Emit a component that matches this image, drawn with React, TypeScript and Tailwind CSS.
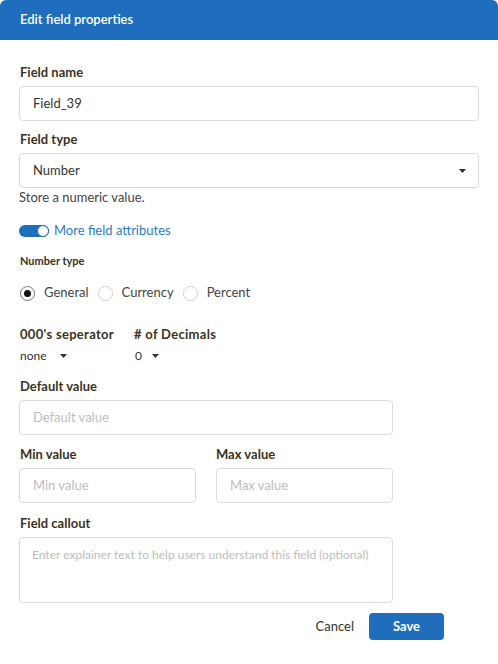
import { useState } from "react";

const font = { fontFamily: "Lato, 'Open Sans', sans-serif" };

function Caret({ className = "" }: { className?: string }) {
  return (
    <svg className={className} width="7" height="4" viewBox="0 0 7 4">
      <path d="M0 0h7L3.5 4z" fill="#333" />
    </svg>
  );
}

function Label({ children, className = "" }: { children: React.ReactNode; className?: string }) {
  return (
    <div className={`text-[13px] font-bold leading-[18px] text-[#3a3324] ${className}`}>{children}</div>
  );
}

function Input({ value, placeholder, className = "" }: { value?: string; placeholder?: string; className?: string }) {
  return (
    <div
      className={`flex h-[35px] items-center rounded-[4px] border border-[#dcdcdc] bg-white px-[13px] text-[13px] ${className}`}
    >
      {value ? (
        <span className="text-[#333]">{value}</span>
      ) : (
        <span className="text-[#bdbdbd]">{placeholder}</span>
      )}
    </div>
  );
}

function Radio({ label, checked }: { label: string; checked?: boolean }) {
  return (
    <div className="flex items-center gap-[9px]">
      <span
        className={`flex h-[15px] w-[15px] items-center justify-center rounded-full border ${
          checked ? "border-[#777]" : "border-[#d0d0d0]"
        }`}
      >
        {checked && <span className="h-[7px] w-[7px] rounded-full bg-[#111]" />}
      </span>
      <span className="text-[13px] text-[#444]">{label}</span>
    </div>
  );
}

export default function App() {
  const [more] = useState(true);
  const [type] = useState("general");

  return (
    <div className="h-[664px] w-[498px] bg-white" style={font}>
      <div className="flex h-[40px] items-center rounded-t-[6px] bg-[#1f6dbd] pl-5 text-[13px] font-semibold text-white">
        Edit field properties
      </div>

      <div className="px-[19px] pt-[23px]">
        <Label className="ml-px">Field name</Label>
        <Input value="Field_39" className="mt-[5px]" />

        <Label className="ml-px mt-[9px]">Field type</Label>
        <div className="mt-[5px] flex h-[35px] items-center justify-between rounded-[4px] border border-[#dcdcdc] pl-[13px] pr-[12px] text-[13px] text-[#333]">
          <span>Number</span>
          <Caret />
        </div>
        <div className="text-[13px] leading-[18px] text-[#444]">Store a numeric value.</div>

        <div className="mt-[16px] flex h-[18px] items-center gap-[5px]">
          <span className="relative h-[12px] w-[30px] rounded-full bg-[#1f6dbd]">
            {more && (
              <span className="absolute right-0 top-0 h-[12px] w-[12px] rounded-full border-[1.5px] border-[#1f6dbd] bg-white" />
            )}
          </span>
          <span className="text-[13px] text-[#2b7bcc]">More field attributes</span>
        </div>

        <div className="ml-px mt-[13px] text-[11px] font-bold leading-[16px] text-[#3a3324]">Number type</div>

        <div className="ml-px mt-[15px] flex h-[18px] items-center gap-[9px]">
          <Radio label="General" checked={type === "general"} />
          <Radio label="Currency" checked={type === "currency"} />
          <Radio label="Percent" checked={type === "percent"} />
        </div>

        <div className="ml-px mt-[23px] flex">
          <div className="w-[114px]">
            <Label className="tracking-[0.3px]">000's seperator</Label>
            <div className="mt-[4px] flex h-[18px] items-center gap-[13px] text-[12px] text-[#333]">
              <span>none</span>
              <Caret />
            </div>
          </div>
          <div>
            <Label className="tracking-[0.3px]">
              # of Decimals
            </Label>
            <div className="mt-[4px] flex h-[18px] items-center gap-[10px] pl-px text-[12px] text-[#333]">
              <span>0</span>
              <Caret />
            </div>
          </div>
        </div>

        <Label className="ml-px mt-[12px]">Default value</Label>
        <Input placeholder="Default value" className="mt-[5px] w-[374px]" />

        <div className="mt-[10px] flex gap-[20px]">
          <div className="w-[177px]">
            <Label className="ml-px">Min value</Label>
            <Input placeholder="Min value" className="mt-[5px] h-[34px]" />
          </div>
          <div className="w-[177px]">
            <Label>Max value</Label>
            <Input placeholder="Max value" className="mt-[5px] h-[34px]" />
          </div>
        </div>

        <Label className="ml-px mt-[11px]">Field callout</Label>
        <div className="mt-[5px] h-[66px] w-[374px] rounded-[4px] border border-[#dcdcdc] px-[12px] pt-[8px] text-[12px] text-[#bdbdbd]">
          Enter explainer text to help users understand this field (optional)
        </div>

        <div className="mt-[10px] flex w-[425px] items-center justify-end gap-[15px]">
          <button className="text-[13px] text-[#3a3324]">Cancel</button>
          <button className="h-[27px] w-[75px] rounded-[4px] bg-[#1f6dbd] text-[13px] font-bold text-white">
            Save
          </button>
        </div>
      </div>
    </div>
  );
}
